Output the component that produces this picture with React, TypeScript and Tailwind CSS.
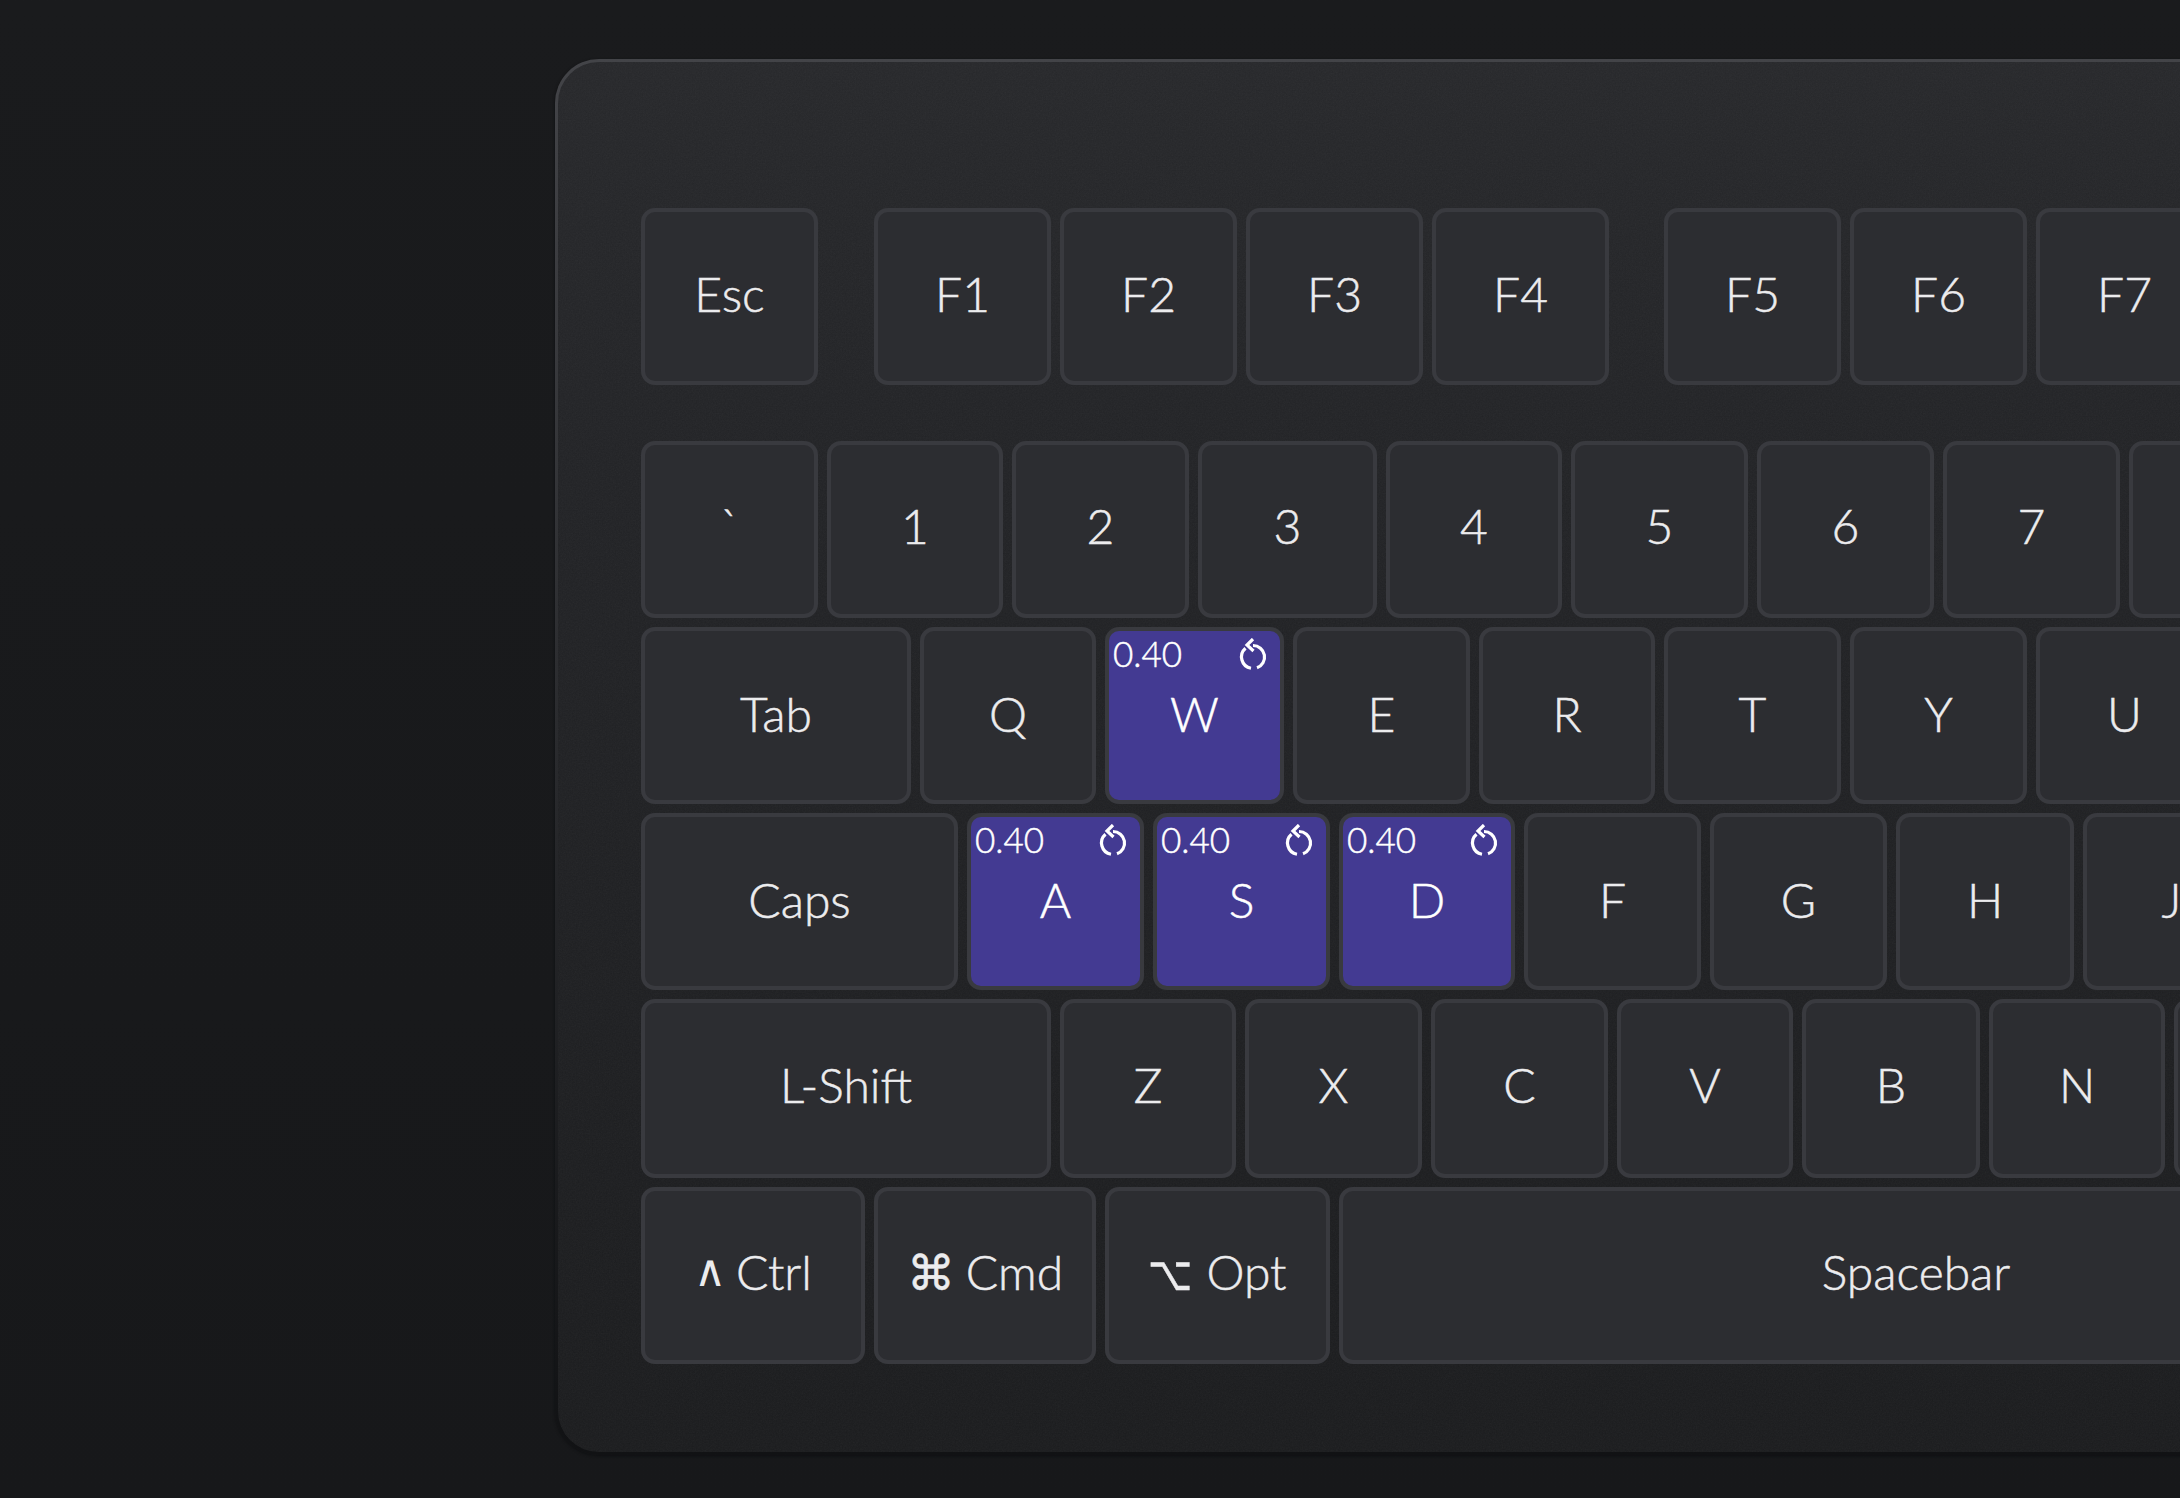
const resetIcon = (
  <svg viewBox="0 0 32 32" className="w-[32px] h-[32px] mt-[8px]" fill="none" stroke="currentColor" strokeWidth="3.2">
    <path d="M8.5 10.3A11.5 11.5 0 0 0 14 30.3" />
    <path d="M16 7.5A11.5 11.5 0 0 1 20 29.8" />
    <path d="M16 1 10 7l6.5 6" />
  </svg>
)

type KeyDef = { label: string; w: string; bound?: boolean; gapLeft?: string; symbol?: string; symbolClass?: string }

const rows: KeyDef[][] = [
  [
    { label: 'Esc', w: 'w-[177px]' },
    { label: 'F1', w: 'w-[177px]', gapLeft: 'ml-[47px]' },
    { label: 'F2', w: 'w-[177px]' },
    { label: 'F3', w: 'w-[177px]' },
    { label: 'F4', w: 'w-[177px]' },
    { label: 'F5', w: 'w-[177px]', gapLeft: 'ml-[46px]' },
    { label: 'F6', w: 'w-[177px]' },
    { label: 'F7', w: 'w-[177px]' },
    { label: 'F8', w: 'w-[177px]' },
  ],
  [
    { label: '`', w: 'w-[177px]' },
    { label: '1', w: 'w-[176px]' },
    { label: '2', w: 'w-[177px]' },
    { label: '3', w: 'w-[179px]' },
    { label: '4', w: 'w-[176px]' },
    { label: '5', w: 'w-[177px]' },
    { label: '6', w: 'w-[177px]' },
    { label: '7', w: 'w-[177px]' },
    { label: '8', w: 'w-[177px]' },
  ],
  [
    { label: 'Tab', w: 'w-[270px]' },
    { label: 'Q', w: 'w-[176px]' },
    { label: 'W', w: 'w-[179px]', bound: true },
    { label: 'E', w: 'w-[177px]' },
    { label: 'R', w: 'w-[176px]' },
    { label: 'T', w: 'w-[177px]' },
    { label: 'Y', w: 'w-[177px]' },
    { label: 'U', w: 'w-[177px]' },
  ],
  [
    { label: 'Caps', w: 'w-[317px]' },
    { label: 'A', w: 'w-[177px]', bound: true },
    { label: 'S', w: 'w-[177px]', bound: true },
    { label: 'D', w: 'w-[176px]', bound: true },
    { label: 'F', w: 'w-[177px]' },
    { label: 'G', w: 'w-[177px]' },
    { label: 'H', w: 'w-[178px]' },
    { label: 'J', w: 'w-[177px]' },
  ],
  [
    { label: 'L-Shift', w: 'w-[410px]' },
    { label: 'Z', w: 'w-[176px]' },
    { label: 'X', w: 'w-[177px]' },
    { label: 'C', w: 'w-[177px]' },
    { label: 'V', w: 'w-[176px]' },
    { label: 'B', w: 'w-[178px]' },
    { label: 'N', w: 'w-[176px]' },
    { label: 'M', w: 'w-[177px]' },
  ],
  [
    { label: 'Ctrl', symbol: '∧', symbolClass: 'text-[44px] relative -top-[4px] mr-[10px] [-webkit-text-stroke:0px]', w: 'w-[224px]' },
    { label: 'Cmd', symbol: '⌘', symbolClass: 'mr-[11px]', w: 'w-[222px]' },
    { label: 'Opt', symbol: '⌥', symbolClass: 'inline-block w-[42px] scale-x-[0.8] origin-left mr-[16px]', w: 'w-[225px]' },
    { label: 'Spacebar', w: 'w-[1154px]' },
  ],
]

// labels in these rows sit a little above the key's centre in the reference
const rowPad = ['pb-[5px]', 'pb-[7px]', 'pb-[3px]', 'pb-[3px]', 'pb-[7px]', 'pb-[8px]']

function Key({ def, pad }: { def: KeyDef; pad: string }) {
  return (
    <div
      className={`${def.w} ${def.gapLeft ?? ''} ${pad} ${def.bound ? 'bg-[#433a92] text-white' : 'bg-[#2c2d31] text-[#ececee]'} relative shrink-0 h-full rounded-[14px] border-[4px] border-[#393a3f] flex items-center justify-center`}
    >
      {def.bound && (
        <div className="absolute -top-[1px] left-0 right-0 pl-[4px] pr-[11px] flex items-start justify-between text-[35px] leading-[46px]">
          <span>0.40</span>
          {resetIcon}
        </div>
      )}
      <span className="whitespace-pre">
        {def.symbol && <span className={def.symbolClass}>{def.symbol}</span>}
        {def.label}
      </span>
    </div>
  )
}

export default function App() {
  return (
    <div className="h-[1498px] w-[2180px] overflow-hidden bg-gradient-to-b from-[#1a1b1d] to-[#17181a] pl-[555px] pt-[59px] font-['Lato','Noto_Sans',sans-serif] font-light text-[48px] [-webkit-text-stroke:0.5px]">
      <div className="w-[2400px] h-[1396px] rounded-[44px] bg-gradient-to-b from-[#434448] to-[#111214] pt-[3px] pl-[3px] pb-[3px] shadow-[0_1px_3px_#0e0f11]">
        <div className="relative h-full rounded-[41px] bg-gradient-to-b from-[#27282b] via-[#222326] via-30% to-[#1b1c1e] pl-[83px] pt-[146px]">
          <svg className="absolute inset-0 w-full h-full opacity-[0.05] rounded-[41px]">
            <filter id="grain">
              <feTurbulence type="fractalNoise" baseFrequency="0.7" numOctaves="3" />
              <feColorMatrix type="saturate" values="0" />
            </filter>
            <rect width="100%" height="100%" filter="url(#grain)" />
          </svg>
          <div className="relative flex gap-[9px] h-[177px] mb-[56px]">
            {rows[0].map((k) => <Key key={k.label} def={k} pad={rowPad[0]} />)}
          </div>
          <div className="relative flex flex-col gap-[9px]">
            {rows.slice(1).map((row, i) => (
              <div key={i} className={`flex gap-[9px] ${i === 3 ? 'h-[179px]' : 'h-[177px]'}`}>
                {row.map((k) => <Key key={k.label} def={k} pad={rowPad[i + 1]} />)}
              </div>
            ))}
          </div>
        </div>
      </div>
    </div>
  )
}
